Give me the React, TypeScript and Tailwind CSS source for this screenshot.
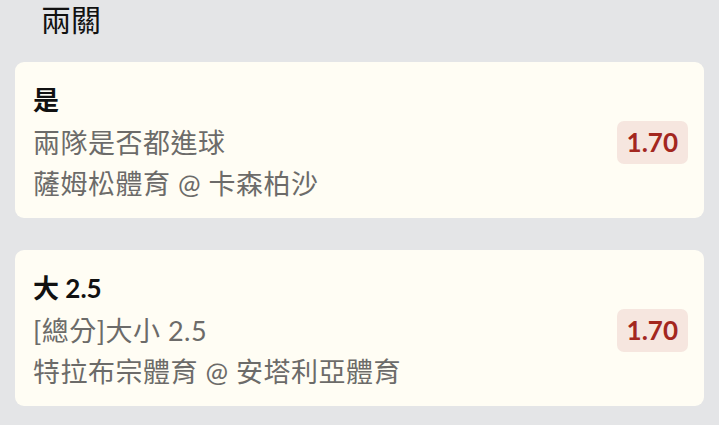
import React from 'react';

const legs = [
  { pick: '是', market: '兩隊是否都進球', match: '薩姆松體育 @ 卡森柏沙', odds: '1.70' },
  { pick: '大 2.5', market: '[總分]大小 2.5', match: '特拉布宗體育 @ 安塔利亞體育', odds: '1.70' },
];

export default function App() {
  return (
    <div
      className="min-h-screen bg-[#e4e5e7] px-[15px] pb-4"
      style={{ fontFamily: 'Lato, "Noto Sans CJK TC", sans-serif' }}
    >
      {/* Header */}
      <h1 className="pl-[26px] h-[62px] text-[30px] leading-[38px] text-[#111] font-normal">兩關</h1>

      {/* Legs */}
      <div className="flex flex-col gap-[32px]">
        {legs.map((leg, i) => (
          <div
            key={i}
            className="flex items-center justify-between rounded-[9px] bg-[#fffdf4] pl-[18px] pr-[16px] pt-[18px] pb-[14px]"
          >
            <div className="flex flex-col">
              <span className="text-[26px] leading-[40px] font-bold text-[#111]">{leg.pick}</span>
              <span className="mt-[2px] text-[27px] leading-[41px] tracking-[0.5px] text-[#6c6b69]">{leg.market}</span>
              <span className="text-[27px] leading-[41px] tracking-[0.5px] text-[#6c6b69]">{leg.match}</span>
            </div>
            <span className="rounded-[7px] bg-[#f6e6df] px-[10px] h-[43px] flex items-center text-[26px] font-bold text-[#a3271f]">
              {leg.odds}
            </span>
          </div>
        ))}
      </div>
    </div>
  );
}
